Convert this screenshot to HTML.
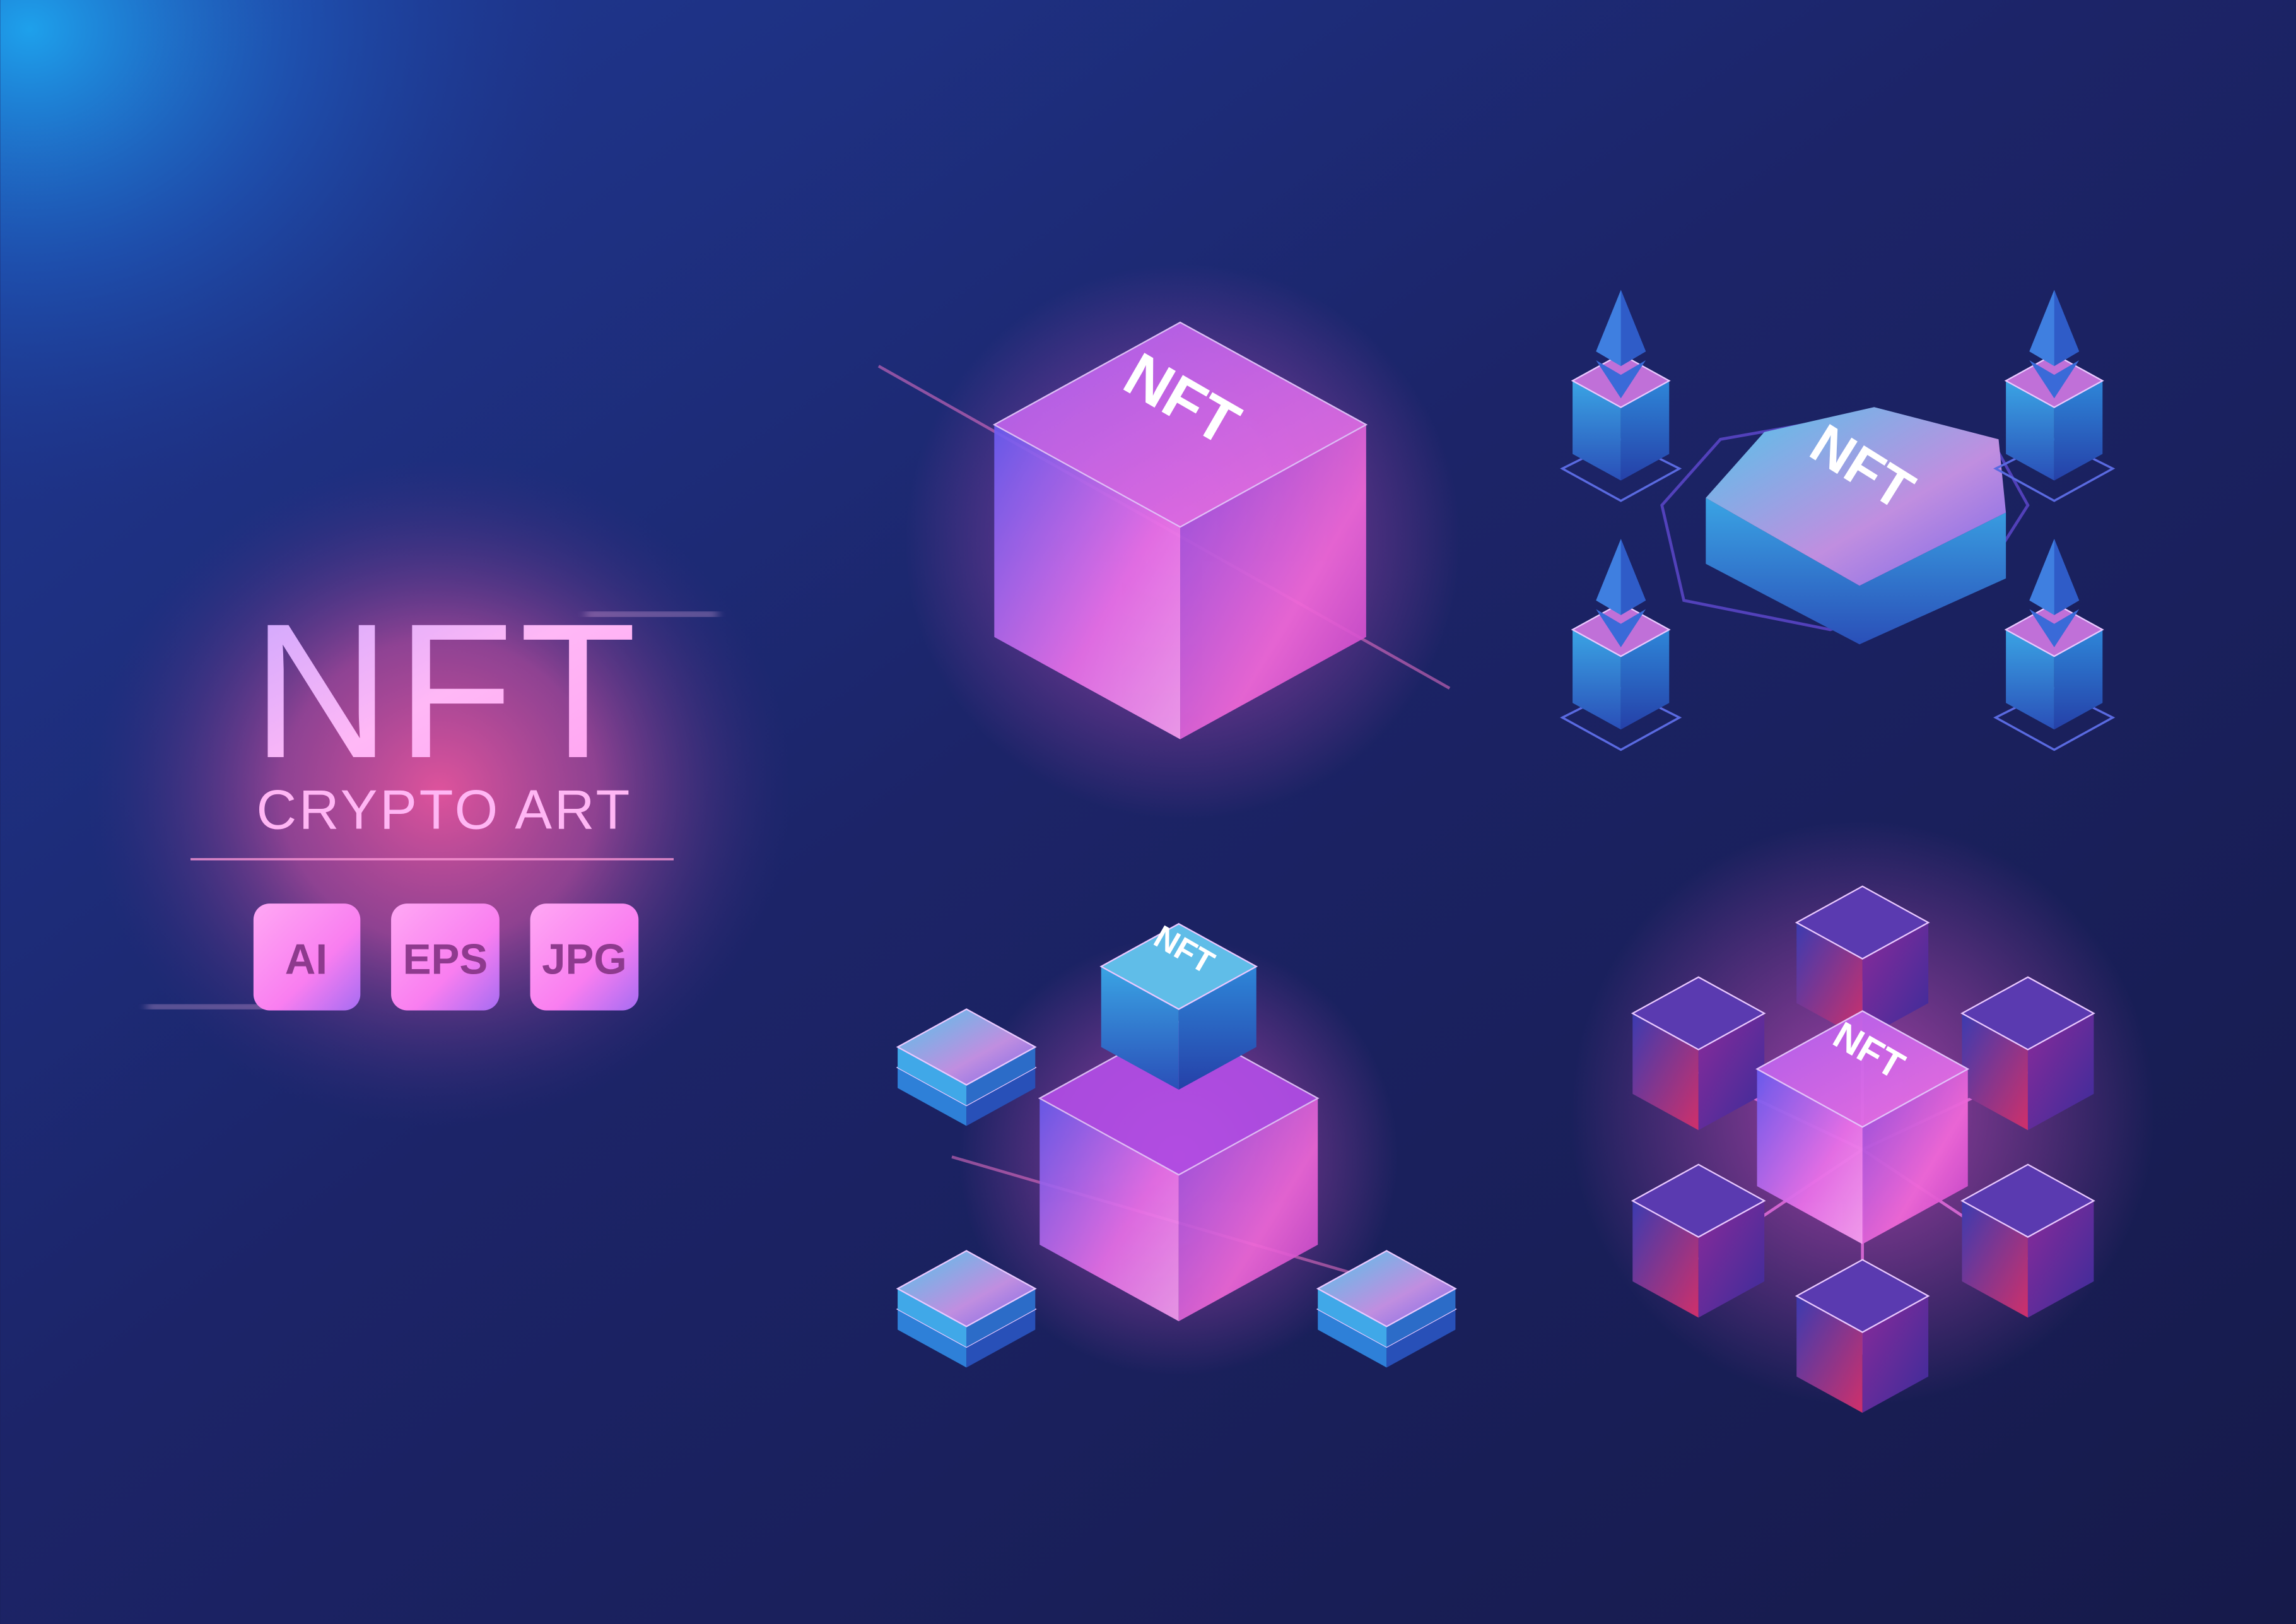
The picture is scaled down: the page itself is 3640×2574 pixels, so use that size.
<!DOCTYPE html>
<html><head><meta charset="utf-8">
<style>
html,body{margin:0;padding:0;width:3640px;height:2574px;overflow:hidden;background:#1a1d55;}
svg{display:block}
</style></head>
<body>
<svg id="s" width="3640" height="2574" viewBox="0 0 1568 1109" xmlns="http://www.w3.org/2000/svg">
<defs>
<linearGradient id="bg" x1="0" y1="0" x2="1" y2="1">
<stop offset="0" stop-color="#1f3a96"/><stop offset="0.45" stop-color="#1c2468"/><stop offset="1" stop-color="#161a4a"/>
</linearGradient>
<radialGradient id="corner" cx="0" cy="0" r="1" gradientUnits="userSpaceOnUse" gradientTransform="translate(20,20) scale(380,330)">
<stop offset="0" stop-color="#1ea6f0" stop-opacity="0.95"/><stop offset="0.5" stop-color="#1f6ad0" stop-opacity="0.45"/><stop offset="1" stop-color="#1f3c9a" stop-opacity="0"/>
</radialGradient>
<radialGradient id="pinkglow" cx="0.5" cy="0.5" r="0.5">
<stop offset="0" stop-color="#e8559e" stop-opacity="0.95"/><stop offset="0.45" stop-color="#b44a9c" stop-opacity="0.75"/><stop offset="1" stop-color="#3b2d80" stop-opacity="0"/>
</radialGradient>
<linearGradient id="txt" x1="0" y1="0" x2="1" y2="1">
<stop offset="0" stop-color="#c9a6ff"/><stop offset="0.5" stop-color="#ffb8f6"/><stop offset="1" stop-color="#ff9ff0"/>
</linearGradient>
<linearGradient id="btn" x1="0" y1="0" x2="1" y2="1">
<stop offset="0" stop-color="#ffa8f4"/><stop offset="0.6" stop-color="#f97ef0"/><stop offset="1" stop-color="#a66cf3"/>
</linearGradient>
<linearGradient id="pTop" x1="0" y1="0" x2="1" y2="1"><stop offset="0" stop-color="#b060f0"/><stop offset="1" stop-color="#f070e0"/></linearGradient>
<linearGradient id="pL" x1="0" y1="0" x2="1" y2="1"><stop offset="0" stop-color="#6b5cf0"/><stop offset="0.6" stop-color="#e870e8"/><stop offset="1" stop-color="#f7a0f0"/></linearGradient>
<linearGradient id="pR" x1="0" y1="0" x2="1" y2="1"><stop offset="0" stop-color="#8e4fe0"/><stop offset="0.6" stop-color="#f068d8"/><stop offset="1" stop-color="#c040c8"/></linearGradient>
<linearGradient id="bTop" x1="0" y1="0" x2="1" y2="1"><stop offset="0" stop-color="#4fc6ea"/><stop offset="0.6" stop-color="#c08ee0"/><stop offset="1" stop-color="#7a66e8"/></linearGradient>
<linearGradient id="bL" x1="0" y1="0" x2="0" y2="1"><stop offset="0" stop-color="#3aa4e4"/><stop offset="1" stop-color="#2a4fb8"/></linearGradient>
<linearGradient id="bR" x1="0" y1="0" x2="0" y2="1"><stop offset="0" stop-color="#2e86d8"/><stop offset="1" stop-color="#2540a8"/></linearGradient>
<linearGradient id="hL" x1="0" y1="0" x2="1" y2="1"><stop offset="0" stop-color="#3b3bb0"/><stop offset="1" stop-color="#d0306a"/></linearGradient>
<linearGradient id="hR" x1="0" y1="0" x2="1" y2="1"><stop offset="0" stop-color="#8a2a9a"/><stop offset="1" stop-color="#3a2d9a"/></linearGradient>
<radialGradient id="cglow" cx="0.5" cy="0.5" r="0.5"><stop offset="0" stop-color="#ff5ad8" stop-opacity="0.6"/><stop offset="1" stop-color="#ff5ad8" stop-opacity="0"/></radialGradient>
<filter id="blur"><feGaussianBlur stdDeviation="3"/></filter>
</defs>
<rect width="1568" height="1109" fill="url(#bg)"/>
<rect width="1568" height="1109" fill="url(#corner)"/>
<ellipse cx="300" cy="540" rx="240" ry="230" fill="url(#pinkglow)"/>
<g id="art"></g>
<text x="172" y="517" font-family="Liberation Sans, sans-serif" font-size="131" fill="url(#txt)" letter-spacing="4">NFT</text>
<text x="175" y="566" font-family="Liberation Sans, sans-serif" font-size="38" fill="#ffb6f4" textLength="255">CRYPTO ART</text>
<rect x="130" y="586" width="330" height="1.5" fill="#ff9ad8" opacity="0.8"/>
<rect x="400" y="418" width="90" height="3" fill="#ffc0f0" opacity="0.7" filter="url(#blur)"/>
<rect x="100" y="686" width="120" height="3" fill="#ffc0f0" opacity="0.7" filter="url(#blur)"/>
<rect x="173" y="617" width="73" height="73" rx="11" fill="url(#btn)"/>
<rect x="267" y="617" width="74" height="73" rx="11" fill="url(#btn)"/>
<rect x="362" y="617" width="74" height="73" rx="11" fill="url(#btn)"/>
<g font-family="Liberation Sans, sans-serif" font-size="29" font-weight="bold" fill="#8e3a8e" text-anchor="middle">
<text x="209" y="665">AI</text><text x="304" y="665">EPS</text><text x="399" y="665">JPG</text>
</g>
</svg>
<script>
var g=document.getElementById('art'),h='';
function cube(cx,cy,w,H,t,l,r,op){var d=w*0.55;op=op||1;
h+='<g opacity="'+op+'"><polygon points="'+(cx-w)+','+cy+' '+cx+','+(cy+d)+' '+cx+','+(cy+d+H)+' '+(cx-w)+','+(cy+H)+'" fill="'+l+'"/>';
h+='<polygon points="'+(cx+w)+','+cy+' '+cx+','+(cy+d)+' '+cx+','+(cy+d+H)+' '+(cx+w)+','+(cy+H)+'" fill="'+r+'"/>';
h+='<polygon points="'+cx+','+(cy-d)+' '+(cx+w)+','+cy+' '+cx+','+(cy+d)+' '+(cx-w)+','+cy+'" fill="'+t+'" stroke="#e9c8ff" stroke-width="1"/></g>';}
function glow(cx,cy,r){h+='<ellipse cx="'+cx+'" cy="'+cy+'" rx="'+r+'" ry="'+r+'" fill="url(#cglow)"/>';}
glow(808,370,190);
h+='<line x1="600" y1="250" x2="990" y2="470" stroke="#ff7ad0" stroke-width="2" opacity="0.5"/>';
cube(806,290,127,145,'url(#pTop)','url(#pL)','url(#pR)',0.92);
h+='<text x="800" y="285" font-family="Liberation Sans, sans-serif" font-size="42" font-weight="bold" fill="#fff" transform="rotate(30 800 285)" text-anchor="middle">NFT</text>';
h+='<polygon points="1135,345 1175,300 1260,285 1360,300 1385,345 1350,400 1250,430 1150,410" fill="none" stroke="#6a4fe0" stroke-width="2" opacity="0.7"/>';
h+='<polygon points="1165,340 1165,385 1270,440 1370,395 1370,350 1270,400" fill="url(#bL)"/>';
h+='<polygon points="1165,340 1205,295 1280,278 1365,300 1370,350 1270,400" fill="url(#bTop)"/>';
h+='<text x="1265" y="330" font-family="Liberation Sans, sans-serif" font-size="38" font-weight="bold" fill="#fff" transform="rotate(32 1265 330)" text-anchor="middle">NFT</text>';
[[1107,260],[1403,260],[1107,430],[1403,430]].forEach(function(p){
 h+='<polygon points="'+(p[0]-40)+','+(p[1]+60)+' '+p[0]+','+(p[1]+40)+' '+(p[0]+40)+','+(p[1]+60)+' '+p[0]+','+(p[1]+82)+'" fill="none" stroke="#5a6ae0" stroke-width="1.5"/>';
 cube(p[0],p[1],33,50,'#c070d8','url(#bL)','url(#bR)');
 h+='<polygon points="'+p[0]+','+(p[1]-62)+' '+(p[0]+17)+','+(p[1]-20)+' '+p[0]+','+(p[1]-10)+' '+(p[0]-17)+','+(p[1]-20)+'" fill="#3f7fe0"/>';
 h+='<polygon points="'+p[0]+','+(p[1]-62)+' '+(p[0]+17)+','+(p[1]-20)+' '+p[0]+','+(p[1]-10)+'" fill="#2f5cc8"/>';
 h+='<polygon points="'+(p[0]-17)+','+(p[1]-14)+' '+p[0]+','+(p[1]-4)+' '+(p[0]+17)+','+(p[1]-14)+' '+p[0]+','+(p[1]+12)+'" fill="#3a6ad8"/>';
});
glow(805,790,150);
h+='<line x1="650" y1="790" x2="960" y2="880" stroke="#ff7ad0" stroke-width="2" opacity="0.5"/>';
cube(805,750,95,100,'#b44ee8','url(#pL)','url(#pR)',0.9);
cube(805,660,53,55,'#60bde8','url(#bL)','url(#bR)');
h+='<text x="805" y="655" font-family="Liberation Sans, sans-serif" font-size="22" font-weight="bold" fill="#fff" transform="rotate(30 805 655)" text-anchor="middle">NFT</text>';
[[660,715],[660,880],[947,880]].forEach(function(p){
 cube(p[0],p[1]+14,47,14,'#3050c0','#2e80d8','#2850b8');
 cube(p[0],p[1],47,14,'url(#bTop)','#40a8e8','#2c6cc8');
});
var c=[1272,745],ring=[[1272,630],[1385,692],[1385,820],[1272,885],[1160,820],[1160,692]];
glow(1272,760,200);
ring.forEach(function(p){h+='<line x1="'+c[0]+'" y1="'+(c[1]+40)+'" x2="'+p[0]+'" y2="'+(p[1]+40)+'" stroke="#ff7af0" stroke-width="2" opacity="0.7"/>';});
ring.forEach(function(p){cube(p[0],p[1],45,55,'#5a3ab0','url(#hL)','url(#hR)');});
cube(1272,730,72,80,'url(#pTop)','url(#pL)','url(#pR)',0.95);
h+='<text x="1272" y="725" font-family="Liberation Sans, sans-serif" font-size="26" font-weight="bold" fill="#fff" transform="rotate(30 1272 725)" text-anchor="middle">NFT</text>';
g.innerHTML=h;
</script>
</body></html>
